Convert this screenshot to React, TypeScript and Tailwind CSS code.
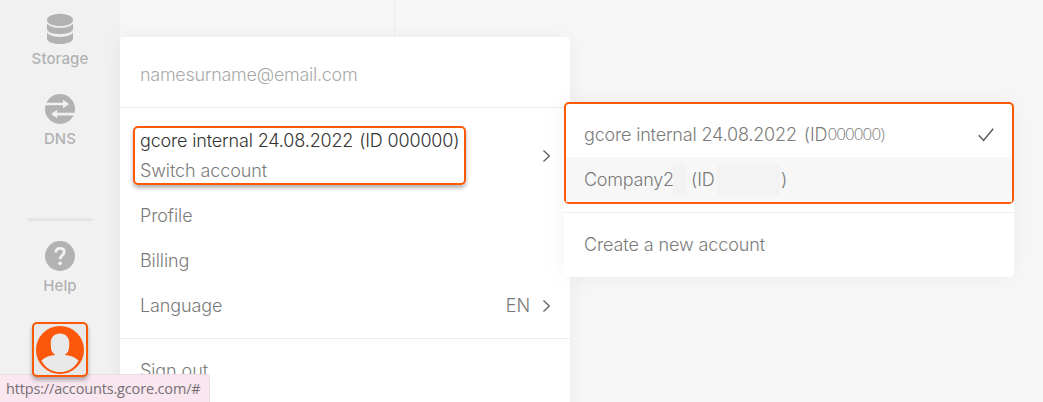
import type { ReactNode } from "react";

function StorageIcon() {
  return (
    <svg width="26" height="32" viewBox="0 0 26 32" fill="#b2b2b2">
      <ellipse cx="13" cy="7" rx="13" ry="6.2" />
      <path d="M0 10.600C2.200 13.700 7 15 13 15S23.800 13.700 26 10.600V16C26 19 20.500 21.200 13 21.200S0 19 0 16Z" />
      <path d="M0 19.600C2.200 22.700 7 24 13 24S23.800 22.700 26 19.600V25.500C26 28.700 20.500 31 13 31S0 28.700 0 25.500Z" />
    </svg>
  );
}

function DnsIcon() {
  return (
    <svg width="30" height="30" viewBox="0 0 30 30">
      <circle cx="15" cy="15" r="15" fill="#b2b2b2" />
      <path d="M0 8.700H18V5.700L24.200 10L18 14.200V11.300H0Z" fill="#f1f1f1" />
      <path d="M30 18.700H12.200V15.800L6 20L12.200 24.300V21.400H30Z" fill="#f1f1f1" />
    </svg>
  );
}

function HelpIcon() {
  return (
    <svg width="30" height="30" viewBox="0 0 30 30" fill="none">
      <circle cx="15" cy="15" r="15" fill="#b2b2b2" />
      <path
        d="M10.800 11.600C10.800 8.900 12.500 7.400 15.100 7.400C17.600 7.400 19.300 8.900 19.300 11.100C19.300 14.300 15.100 14.400 15.100 18.300"
        stroke="#f1f1f1"
        strokeWidth="2.800"
      />
      <circle cx="15.100" cy="22.300" r="1.900" fill="#f1f1f1" />
    </svg>
  );
}

function AvatarIcon() {
  return (
    <svg width="48" height="48" viewBox="0 0 48 48">
      <circle cx="24" cy="24" r="24" fill="#fd570b" />
      <path
        d="M24 7.500C29.800 7.500 33.200 11.500 33.200 16.500V20C33.200 24.500 31.500 27.500 28.600 29C34 29.500 39 31 42.600 34.400C38.600 42 32 46 24 46S9.400 42 5.400 34.400C9 31 14 29.500 19.400 29C16.500 27.500 14.800 24.500 14.800 20V16.500C14.800 11.500 18.200 7.500 24 7.500Z"
        fill="#e9e9e9"
      />
    </svg>
  );
}

function Chevron() {
  return (
    <svg width="8" height="12" viewBox="0 0 8 12" fill="none" stroke="#606060" strokeWidth="1.300">
      <path d="M1.500 0.600L7.300 6L1.500 11.400" />
    </svg>
  );
}

function Check() {
  return (
    <svg width="16" height="14" viewBox="0 0 16 14" fill="none" stroke="#5a5a5a" strokeWidth="1.500">
      <path d="M0.800 7.200L5.600 12.400L15.200 0.800" />
    </svg>
  );
}

function NavItem({ label, children }: { label: string; children: ReactNode }) {
  return (
    <div className="flex w-full flex-col items-center text-[15px] leading-5 font-[450] tracking-[0.1px] text-[#b2b2b2]">
      <div className="flex h-8 items-center">{children}</div>
      <span className="mt-1">{label}</span>
    </div>
  );
}

function Row({ children }: { children: ReactNode }) {
  return <div className="flex h-[45px] items-center px-5">{children}</div>;
}

export default function App() {
  return (
    <div className="relative flex h-[402px] w-[1043px] overflow-hidden bg-[#f7f7f7] font-['Inter',sans-serif] text-[18px] leading-[30px] font-light tracking-[-0.1px] whitespace-nowrap text-[#7b7b7b]">
      <aside className="flex w-[120px] shrink-0 flex-col items-center bg-[#f1f1f1] pt-[13px]">
        <NavItem label="Storage"><StorageIcon /></NavItem>
        <div className="mt-6 w-full">
          <NavItem label="DNS"><DnsIcon /></NavItem>
        </div>
        <div className="mt-[69px] h-[3px] w-[65px] rounded-full bg-[#e5e5e5]" />
        <div className="mt-[19px] w-full">
          <NavItem label="Help"><HelpIcon /></NavItem>
        </div>
        <div className="z-20 mt-[26px] flex h-[55px] w-[56px] shrink-0 items-center justify-center rounded-[5px] border-2 border-[#fd5a05] bg-[#e9e9e9] shadow-[0_3px_4px_rgba(0,0,0,0.3)]">
          <AvatarIcon />
        </div>
      </aside>
      <main className="flex flex-1">
        <div className="w-[275px] border-r border-[#ededed]" />
      </main>

      <nav className="absolute top-[37px] left-[120px] w-[450px] rounded-[4px] bg-white pb-[30px] shadow-[0_0_24px_rgba(0,0,0,0.05)]">
        <div className="flex h-[71px] items-center border-b border-[#eee] px-5 pt-[5px] tracking-[-0.28px] text-[#aaa]">
          namesurname@email.com
        </div>
        <div className="border-b border-[#eee] py-[10px]">
          <div className="flex h-[75px] items-center justify-between pr-5 pl-[13px]">
            <div className="h-[59px] w-[333px] rounded-[5px] border-2 border-[#fd5a05] pl-[5px] shadow-[0_3px_4px_rgba(0,0,0,0.3)]">
              <div className="-mt-0.5 tracking-[-0.16px] text-[#333]">gcore internal 24.08.2022 <span className="ml-[1px]">(ID 000000)</span></div>
              <div>Switch account</div>
            </div>
            <Chevron />
          </div>
          <Row>Profile</Row>
          <Row>Billing</Row>
          <Row>
            <span className="flex-1">Language</span>
            <span className="mr-3">EN</span>
            <Chevron />
          </Row>
        </div>
        <div className="pt-[9px]">
          <Row>Sign out</Row>
        </div>
      </nav>

      <div className="absolute top-[102px] left-[564px] w-[450px] rounded-[4px] bg-white pb-[9px] shadow-[0_0_24px_rgba(0,0,0,0.05)]">
        <div className="h-[102px] rounded-[5px] border-2 border-[#fd5a05] pt-2">
          <div className="flex h-[45px] items-center justify-between pr-[18px] pl-[18px]">
            <div className="flex">
              <span className="tracking-[-0.18px]">gcore internal 24.08.2022</span>
              <span className="ml-[7px]">(ID</span>
              <span className="-mt-px font-['Open_Sans',sans-serif] text-[17px] tracking-[-0.9px]">000000)</span>
            </div>
            <Check />
          </div>
          <div className="flex h-[45px] items-center bg-[#f7f7f7] px-[18px]">
            <span className="w-[89px] tracking-[-0.25px]">Company2</span>
            <span className="h-[31px] w-[13px] bg-[#f3f3f3]" />
            <span className="ml-[5px] w-[26px]">(ID</span>
            <span className="h-[31px] w-[63px] bg-[#f3f3f3]" />
            <span className="ml-px">)</span>
          </div>
        </div>
        <div className="mt-2 border-t border-[#eee] pt-[9px] pb-px">
          <Row>Create a new account</Row>
        </div>
      </div>

      <div className="absolute top-[374px] left-0 z-10 flex h-[28px] w-[210px] items-center rounded-tr-[4px] border-t border-r border-[#eddce4] bg-[#f9e6ee] pl-[6px] font-['Open_Sans',sans-serif] text-[14.5px] font-normal tracking-[-0.16px] text-[#757075]">
        https://accounts.gcore.com/#
      </div>
    </div>
  );
}
